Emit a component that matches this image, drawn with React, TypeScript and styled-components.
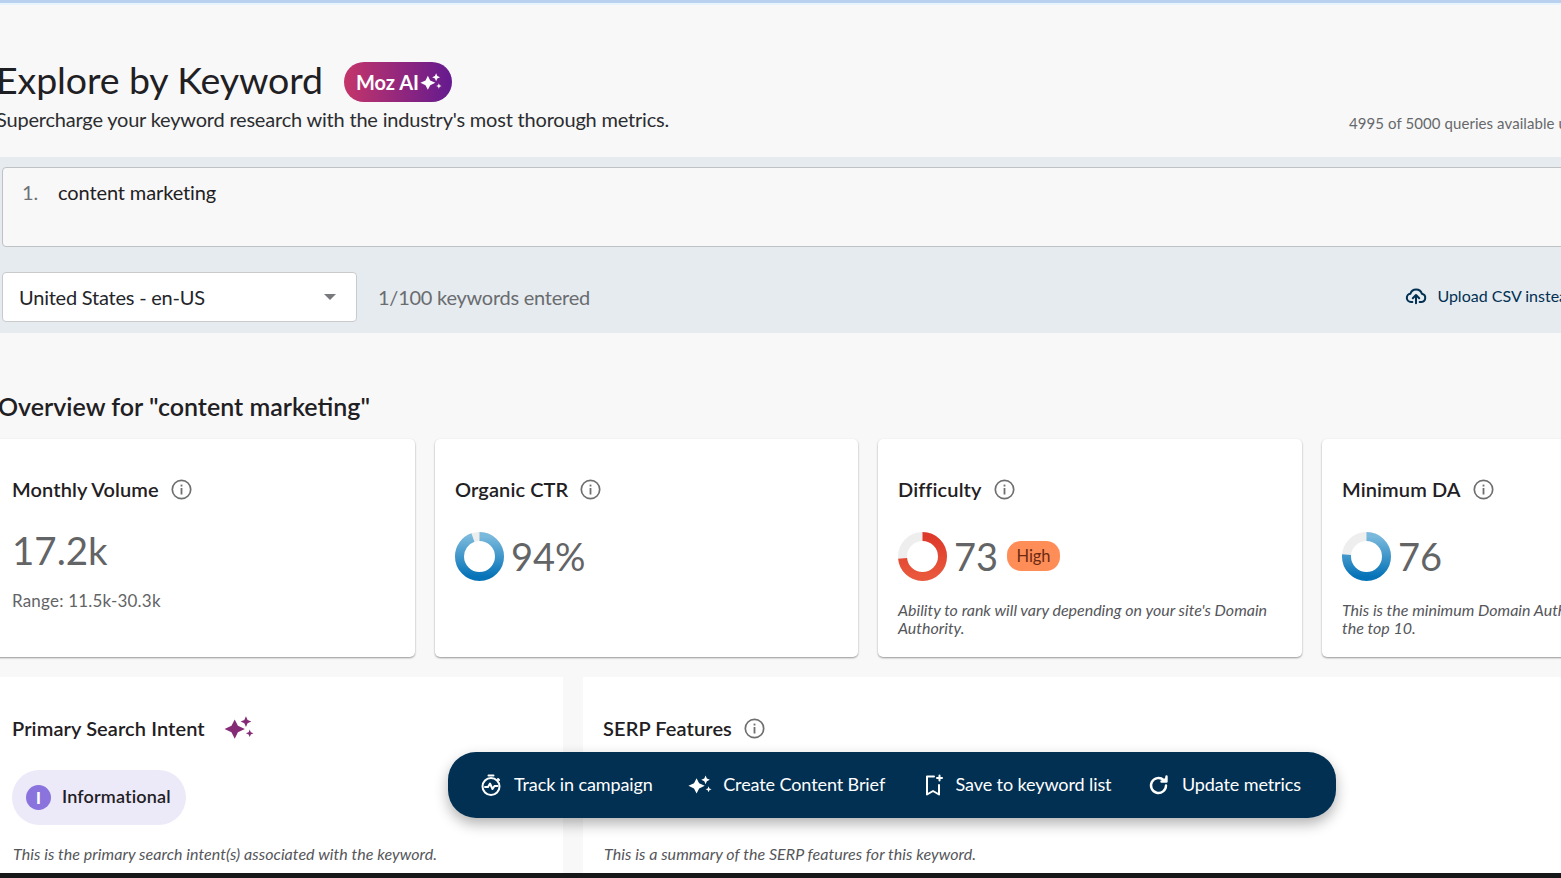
import React from "react";
import styled, { createGlobalStyle } from "styled-components";

const GlobalStyle = createGlobalStyle`
  html, body {
    margin: 0;
    padding: 0;
    height: 100%;
    overflow: hidden;
    background: #f8f8f8;
    font-family: Lato, "Liberation Sans", sans-serif;
    color: #1f2023;
  }
  * { box-sizing: border-box; }
`;

const Viewport = styled.div`
  position: relative;
  width: 1561px;
  height: 878px;
  overflow: hidden;
  background: #f8f8f8;
`;

const TopLine = styled.div`
  height: 5px;
  background: linear-gradient(#b9d0ee 0 3px, #e9f5fc 3px 5px);
`;

// the page is scrolled sideways in the shot, so it starts left of the window
const Page = styled.div`
  width: 1760px;
  margin-left: -8px;
`;

const Header = styled.header`
  height: 152px;
  padding: 52px 6px 0 6px;
  display: flex;
  justify-content: space-between;
`;

const TitleRow = styled.div`
  display: flex;
  align-items: center;
  gap: 21px;
  height: 50px;
`;

const Title = styled.h1`
  margin: 0 0 0 -2px;
  padding-bottom: 6px;
  font-size: 37.5px;
  font-weight: 400;
  letter-spacing: -0.1px;
  color: #1f2023;
`;

const AiBadge = styled.span`
  display: inline-flex;
  align-items: center;
  gap: 1px;
  height: 40px;
  padding: 0 10px 0 12px;
  border-radius: 20px;
  color: #fff;
  font-size: 20px;
  font-weight: 700;
  background: linear-gradient(90deg, #c4356a, #641a8f);
`;

const Subtitle = styled.p`
  margin: 0 0 0 -2px;
  font-size: 20px;
  letter-spacing: -0.2px;
  color: #2c2d30;
`;

const Queries = styled.div`
  margin-top: 57px;
  width: 397px;
  white-space: nowrap;
  font-size: 15px;
  letter-spacing: 0.08px;
  color: #66686b;
`;

const KeywordPanel = styled.section`
  height: 176px;
  padding: 10px 10px 0;
  background: #e6ebef;
`;

const KeywordBox = styled.div`
  height: 80px;
  display: flex;
  gap: 20px;
  padding: 12px 19px;
  font-size: 20px;
  letter-spacing: -0.12px;
  background: #f8f8f8;
  border: 1px solid #bfc1c3;
  border-radius: 4px;
`;

const LineNumber = styled.span`
  color: #6f7174;
`;

const KeywordControls = styled.div`
  display: flex;
  align-items: center;
  margin-top: 25px;
  height: 50px;
`;

const SelectBox = styled.div`
  width: 355px;
  height: 50px;
  display: flex;
  align-items: center;
  justify-content: space-between;
  padding: 0 20px 0 16px;
  background: #fff;
  border: 1px solid #c9cacc;
  border-radius: 4px;
  font-size: 20px;
  letter-spacing: -0.22px;
  color: #24252a;
`;

const Caret = styled.span`
  width: 0;
  height: 0;
  border-left: 6px solid transparent;
  border-right: 6px solid transparent;
  border-top: 6px solid #77797c;
`;

const KeywordCount = styled.span`
  margin-left: 21px;
  font-size: 20px;
  letter-spacing: -0.25px;
  color: #6a6c6f;
`;

const UploadLink = styled.span`
  display: flex;
  align-items: center;
  gap: 10px;
  margin-left: auto;
  padding-right: 166px;
  padding-bottom: 3px;
  white-space: nowrap;
  font-size: 16px;
  color: #013053;
`;

const OverviewTitle = styled.h2`
  margin: 0;
  padding: 58px 6px 0 6px;
  height: 106px;
  font-size: 25px;
  font-weight: 600;
  color: #1f2023;
`;

const CardRow = styled.div`
  display: grid;
  grid-template-columns: 423px 423px 424px 424px;
  gap: 20px;
`;

const Card = styled.article`
  height: 218px;
  padding: 37px 20px 0;
  background: #fff;
  border-radius: 5px;
  box-shadow: 0 1px 2px rgba(0, 0, 0, 0.4);
`;

const CardTitle = styled.div<{ $gap?: number }>`
  display: flex;
  align-items: center;
  gap: ${(p) => p.$gap ?? 12}px;
  height: 26px;
  font-size: 20px;
  font-weight: 600;
  letter-spacing: 0.1px;
  color: #1f2023;
`;

const InfoIcon = styled.svg`
  width: 21px;
  height: 21px;
  flex: none;
`;

const BigValue = styled.div`
  margin-top: 25px;
  font-size: 38.5px;
  line-height: 47px;
  color: #636466;
`;

const RangeText = styled.div`
  margin-top: 16px;
  font-size: 17px;
  letter-spacing: 0.2px;
  color: #636466;
`;

const GaugeRow = styled.div`
  display: flex;
  align-items: center;
  gap: 7px;
  margin-top: 30px;
  height: 48px;
  font-size: 38px;
  color: #636466;
`;

const Gauge = styled.svg`
  width: 49px;
  height: 49px;
  flex: none;
`;

const Pill = styled.span`
  margin-left: 2px;
  padding: 0 9.500px;
  height: 30px;
  line-height: 30px;
  border-radius: 14px;
  font-size: 16.500px;
  letter-spacing: -0.1px;
  background: #ff8d58;
  color: #6b2a12;
`;

const Note = styled.p`
  margin: 21px 0 0;
  font-size: 16px;
  line-height: 18px;
  font-style: italic;
  color: #55565a;
`;

const LowerRow = styled.div`
  display: grid;
  grid-template-columns: 571px 1fr;
  gap: 20px;
  margin-top: 20px;
`;

const Panel = styled.article`
  height: 220px;
  padding: 38px 20px 0;
  background: #fff;
`;

const IntentChip = styled.div`
  display: inline-flex;
  align-items: center;
  gap: 11px;
  height: 55px;
  margin-top: 29px;
  padding: 0 15px 0 14px;
  border-radius: 28px;
  background: #ece9f9;
  font-size: 18px;
  font-weight: 600;
  letter-spacing: 0.15px;
  color: #1f2023;
`;

const IntentLabel = styled.span`
  padding-bottom: 3px;
`;

const IntentLetter = styled.span`
  width: 25px;
  height: 25px;
  border-radius: 50%;
  display: flex;
  align-items: center;
  justify-content: center;
  background: #8a73dc;
  color: #fff;
  font-size: 16px;
  font-weight: 900;
`;

const PanelNote = styled(Note)`
  margin-top: 20px;
  padding-left: 1px;
  letter-spacing: 0.05px;
`;

const SerpBody = styled.div`
  height: 84px;
`;

const ActionBar = styled.nav`
  position: absolute;
  left: 448px;
  top: 752px;
  width: 888px;
  height: 66px;
  display: flex;
  align-items: center;
  justify-content: space-between;
  padding: 0 35px 0 31px;
  border-radius: 28px;
  background: #013053;
  box-shadow: 0 6px 14px rgba(0, 0, 0, 0.3);
  color: #fff;
`;

const ActionItem = styled.span`
  display: flex;
  align-items: center;
  gap: 11px;
  font-size: 18px;
  letter-spacing: -0.1px;
  white-space: nowrap;
`;

const ActionLabel = styled.span`
  padding-bottom: 2px;
`;

const ActionIcon = styled.svg`
  width: 24px;
  height: 24px;
  flex: none;
`;

const BottomEdge = styled.div`
  position: absolute;
  left: 0;
  right: 0;
  bottom: 0;
  height: 5px;
  background: #161718;
`;

const Info = () => (
  <InfoIcon viewBox="0 0 21 21" fill="none">
    <circle cx="10.500" cy="10.500" r="9.200" stroke="#6e6f71" strokeWidth="1.700" />
    <rect x="9.600" y="9" width="1.800" height="6.500" fill="#6e6f71" />
    <rect x="9.600" y="5.600" width="1.800" height="1.900" fill="#6e6f71" />
  </InfoIcon>
);

const Sparkles = ({ color, size }: { color: string; size: number }) => (
  <svg width={size} height={size} viewBox="0 0 28 24" fill={color} style={{ flex: "none" }}>
    <path d="M10 4 13 10 19.500 13 13 16 10 22 7 16 .5 13 7 10Z" />
    <path d="M20.500 1 22 4.500 25.500 6 22 7.500 20.500 11 19 7.500 15.500 6 19 4.500Z" />
    <path d="M24 13.500 25 16 27.500 17 25 18 24 20.500 23 18 20.500 17 23 16Z" />
  </svg>
);

// donut with a light track, start at 12 o'clock going clockwise
const Donut = ({ value, id, from, to }: { value: number; id: string; from: string; to: string }) => {
  const r = 20;
  const c = 2 * Math.PI * r;
  return (
    <Gauge viewBox="0 0 49 49">
      <defs>
        {/* the ring is rotated, so x1/x2 here run top to bottom on screen */}
        <linearGradient id={id} x1="1" y1="0" x2="0" y2="0">
          <stop offset="0" stopColor={from} />
          <stop offset="1" stopColor={to} />
        </linearGradient>
      </defs>
      <circle cx="24.500" cy="24.500" r={r} fill="none" stroke="#eeeeee" strokeWidth="9" />
      <circle
        cx="24.500"
        cy="24.500"
        r={r}
        fill="none"
        stroke={`url(#${id})`}
        strokeWidth="9"
        strokeDasharray={`${(c * value) / 100} ${c}`}
        transform="rotate(-90 24.500 24.500)"
      />
    </Gauge>
  );
};

const App = () => {
  return (
    <Viewport>
      <GlobalStyle />
      <TopLine />
      <Page>
        <Header>
          <div>
            <TitleRow>
              <Title>Explore by Keyword</Title>
              <AiBadge>
                Moz AI
                <Sparkles color="#fff" size={22} />
              </AiBadge>
            </TitleRow>
            <Subtitle>Supercharge your keyword research with the industry's most thorough metrics.</Subtitle>
          </div>
          <Queries>4995 of 5000 queries available until</Queries>
        </Header>

        <KeywordPanel>
          <KeywordBox>
            <LineNumber>1.</LineNumber>
            <span>content marketing</span>
          </KeywordBox>
          <KeywordControls>
            <SelectBox>
              United States - en-US
              <Caret />
            </SelectBox>
            <KeywordCount>1/100 keywords entered</KeywordCount>
            <UploadLink>
              <svg width="22" height="22" viewBox="0 0 24 24" fill="none" stroke="#013053" strokeWidth="2.200" strokeLinecap="round" strokeLinejoin="round">
                <path d="M8 18.500H6.500a4.500 4.500 0 0 1-.6-8.960A6.500 6.500 0 0 1 18.400 9.600a4.500 4.500 0 0 1-.4 8.900H16" />
                <path d="M12 20v-8M8.500 14.500 12 11l3.500 3.500" />
              </svg>
              Upload CSV instead
            </UploadLink>
          </KeywordControls>
        </KeywordPanel>

        <OverviewTitle>Overview for "content marketing"</OverviewTitle>

        <CardRow>
          <Card>
            <CardTitle>
              Monthly Volume
              <Info />
            </CardTitle>
            <BigValue>17.2k</BigValue>
            <RangeText>Range: 11.5k-30.3k</RangeText>
          </Card>
          <Card>
            <CardTitle>
              Organic CTR
              <Info />
            </CardTitle>
            <GaugeRow>
              <Donut value={94} id="ctr" from="#79b9dc" to="#0673b8" />
              94%
            </GaugeRow>
          </Card>
          <Card>
            <CardTitle>
              Difficulty
              <Info />
            </CardTitle>
            <GaugeRow>
              <Donut value={73} id="diff" from="#de3a2b" to="#e9583c" />
              73
              <Pill>High</Pill>
            </GaugeRow>
            <Note>Ability to rank will vary depending on your site's Domain Authority.</Note>
          </Card>
          <Card>
            <CardTitle>
              Minimum DA
              <Info />
            </CardTitle>
            <GaugeRow>
              <Donut value={76} id="da" from="#79b9dc" to="#0673b8" />
              76
            </GaugeRow>
            <Note>This is the minimum Domain Authority needed to rank in the top 10.</Note>
          </Card>
        </CardRow>

        <LowerRow>
          <Panel>
            <CardTitle $gap={19}>
              Primary Search Intent
              <Sparkles color="#852a75" size={30} />
            </CardTitle>
            <IntentChip>
              <IntentLetter>I</IntentLetter>
              <IntentLabel>Informational</IntentLabel>
            </IntentChip>
            <PanelNote>This is the primary search intent(s) associated with the keyword.</PanelNote>
          </Panel>
          <Panel>
            <CardTitle>
              SERP Features
              <Info />
            </CardTitle>
            <SerpBody />
            <PanelNote>This is a summary of the SERP features for this keyword.</PanelNote>
          </Panel>
        </LowerRow>
      </Page>

      <ActionBar>
        <ActionItem>
          <ActionIcon viewBox="0 0 24 24" fill="none" stroke="#fff" strokeWidth="2" strokeLinecap="round" strokeLinejoin="round">
            <path d="M9.500 2.500h5M19 6l1 1" />
            <circle cx="12" cy="13.500" r="8.500" />
            <path d="M6 14h3l2-3.500 2.500 5.500 2-3h3" />
          </ActionIcon>
          <ActionLabel>Track in campaign</ActionLabel>
        </ActionItem>
        <ActionItem>
          <Sparkles color="#fff" size={24} />
          <ActionLabel>Create Content Brief</ActionLabel>
        </ActionItem>
        <ActionItem>
          <ActionIcon viewBox="0 0 24 24" fill="none" stroke="#fff" strokeWidth="2" strokeLinecap="round" strokeLinejoin="round">
            <path d="M13 3.500H6v18l6-3.500 6 3.500V12" />
            <path d="M18.500 2.500v5M16 5h5" />
          </ActionIcon>
          <ActionLabel>Save to keyword list</ActionLabel>
        </ActionItem>
        <ActionItem>
          <ActionIcon viewBox="0 0 24 24" fill="none" stroke="#fff" strokeWidth="2.400" strokeLinecap="round" strokeLinejoin="round">
            <path d="M19 12.500a7.500 7.500 0 1 1-2.400-5.500" />
            <path d="M19.500 3.500v5h-5" fill="#fff" />
          </ActionIcon>
          <ActionLabel>Update metrics</ActionLabel>
        </ActionItem>
      </ActionBar>
      <BottomEdge />
    </Viewport>
  );
};

export default App;
